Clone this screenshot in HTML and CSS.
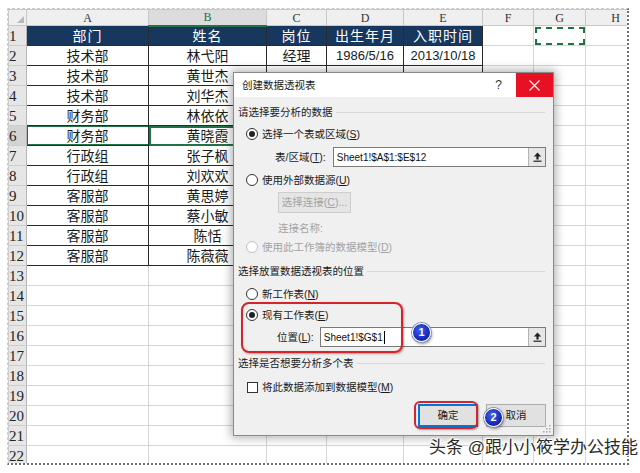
FILE: index.html
```html
<!DOCTYPE html>
<html lang="zh-CN">
<head>
<meta charset="utf-8">
<title>创建数据透视表</title>
<link rel="stylesheet" href="styles.css">
</head>
<body>
<div class="screen">
  <div class="sheet">
    <table class="grid">
      <colgroup>
        <col class="w-rh"><col class="w-a"><col class="w-b"><col class="w-c"><col class="w-d"><col class="w-e"><col class="w-f"><col class="w-g"><col class="w-h">
      </colgroup>
      <tr class="ch"><th class="corner"></th><th>A</th><th class="on">B</th><th>C</th><th>D</th><th>E</th><th>F</th><th>G</th><th>H</th></tr>
      <tr><th>1</th><td class="t hd">部门</td><td class="t hd">姓名</td><td class="t hd">岗位</td><td class="t hd">出生年月</td><td class="t hd">入职时间</td><td></td><td class="ants"></td><td></td></tr>
      <tr><th>2</th><td class="t">技术部</td><td class="t">林弋阳</td><td class="t">经理</td><td class="t n">1986/5/16</td><td class="t n">2013/10/18</td><td></td><td></td><td></td></tr>
      <tr><th>3</th><td class="t">技术部</td><td class="t">黄世杰</td><td class="t"></td><td class="t"></td><td class="t"></td><td></td><td></td><td></td></tr>
      <tr><th>4</th><td class="t">技术部</td><td class="t">刘华杰</td><td class="t"></td><td class="t"></td><td class="t"></td><td></td><td></td><td></td></tr>
      <tr><th>5</th><td class="t">财务部</td><td class="t">林依依</td><td class="t"></td><td class="t"></td><td class="t"></td><td></td><td></td><td></td></tr>
      <tr><th class="on">6</th><td class="t sel-row">财务部</td><td class="t active">黄晓霞</td><td class="t"></td><td class="t"></td><td class="t"></td><td></td><td></td><td></td></tr>
      <tr><th>7</th><td class="t">行政组</td><td class="t">张子枫</td><td class="t"></td><td class="t"></td><td class="t"></td><td></td><td></td><td></td></tr>
      <tr><th>8</th><td class="t">行政组</td><td class="t">刘欢欢</td><td class="t"></td><td class="t"></td><td class="t"></td><td></td><td></td><td></td></tr>
      <tr><th>9</th><td class="t">客服部</td><td class="t">黄思婷</td><td class="t"></td><td class="t"></td><td class="t"></td><td></td><td></td><td></td></tr>
      <tr><th>10</th><td class="t">客服部</td><td class="t">蔡小敏</td><td class="t"></td><td class="t"></td><td class="t"></td><td></td><td></td><td></td></tr>
      <tr><th>11</th><td class="t">客服部</td><td class="t">陈恬</td><td class="t"></td><td class="t"></td><td class="t"></td><td></td><td></td><td></td></tr>
      <tr><th>12</th><td class="t">客服部</td><td class="t">陈薇薇</td><td class="t"></td><td class="t"></td><td class="t"></td><td></td><td></td><td></td></tr>
      <tr><th>13</th><td></td><td></td><td></td><td></td><td></td><td></td><td></td><td></td></tr>
      <tr><th>14</th><td></td><td></td><td></td><td></td><td></td><td></td><td></td><td></td></tr>
      <tr><th>15</th><td></td><td></td><td></td><td></td><td></td><td></td><td></td><td></td></tr>
      <tr><th>16</th><td></td><td></td><td></td><td></td><td></td><td></td><td></td><td></td></tr>
      <tr><th>17</th><td></td><td></td><td></td><td></td><td></td><td></td><td></td><td></td></tr>
      <tr><th>18</th><td></td><td></td><td></td><td></td><td></td><td></td><td></td><td></td></tr>
      <tr><th>19</th><td></td><td></td><td></td><td></td><td></td><td></td><td></td><td></td></tr>
      <tr><th>20</th><td></td><td></td><td></td><td></td><td></td><td></td><td></td><td></td></tr>
      <tr><th>21</th><td></td><td></td><td></td><td></td><td></td><td></td><td></td><td></td></tr>
      <tr><th>22</th><td></td><td></td><td></td><td></td><td></td><td></td><td></td><td></td></tr>
    </table>
  </div>

  <div class="dlg">
    <div class="dlg-title">
      <span class="dlg-caption">创建数据透视表</span>
      <span class="dlg-help">?</span>
      <span class="dlg-close"><svg width="11" height="11" viewBox="0 0 11 11"><path d="M0.5 0.5 L10.5 10.5 M10.5 0.5 L0.5 10.5" stroke="#fff" stroke-width="1.2" fill="none"/></svg></span>
    </div>
    <div class="dlg-body">
      <div class="sec sec-1"><span>请选择要分析的数据</span></div>
      <div class="opt opt-range"><span class="radio on"></span><span>选择一个表或区域(<u>S</u>)</span></div>
      <div class="field field-range">
        <span class="lbl">表/区域(<u>T</u>):</span>
        <div class="ref"><span class="ref-text">Sheet1!$A$1:$E$12</span><span class="ref-btn"><svg width="9" height="10" viewBox="0 0 9 10"><path d="M4.5 0.5 L0.8 4.5 H3.4 V7.5 H5.6 V4.5 H8.2 Z" fill="#222"/><rect x="0.5" y="8.6" width="8" height="1.2" fill="#222"/></svg></span></div>
      </div>
      <div class="opt opt-ext"><span class="radio"></span><span>使用外部数据源(<u>U</u>)</span></div>
      <div class="conn-row"><span class="btn btn-dis"><span>选择连接(<u>C</u>)...</span></span></div>
      <div class="conn-name">连接名称:</div>
      <div class="opt opt-model dis"><span class="radio"></span><span>使用此工作簿的数据模型(<u>D</u>)</span></div>
      <div class="sec sec-2"><span>选择放置数据透视表的位置</span></div>
      <div class="opt opt-new"><span class="radio"></span><span>新工作表(<u>N</u>)</span></div>
      <div class="opt opt-exist"><span class="radio on"></span><span>现有工作表(<u>E</u>)</span></div>
      <div class="field field-loc">
        <span class="lbl">位置(<u>L</u>):</span>
        <div class="ref"><span class="ref-text">Sheet1!$G$1<span class="caret"></span></span><span class="ref-btn"><svg width="9" height="10" viewBox="0 0 9 10"><path d="M4.5 0.5 L0.8 4.5 H3.4 V7.5 H5.6 V4.5 H8.2 Z" fill="#222"/><rect x="0.5" y="8.6" width="8" height="1.2" fill="#222"/></svg></span></div>
      </div>
      <div class="sec sec-3"><span>选择是否想要分析多个表</span></div>
      <div class="opt opt-check"><span class="check"></span><span>将此数据添加到数据模型(<u>M</u>)</span></div>
      <div class="actions">
        <span class="btn btn-ok">确定</span>
        <span class="btn btn-cancel">取消</span>
      </div>
    </div>
    <svg class="grip" width="11" height="11" viewBox="0 0 11 11"><g fill="#a8a8a8"><rect x="8" y="2" width="1.5" height="1.5"/><rect x="5" y="5" width="1.5" height="1.5"/><rect x="8" y="5" width="1.5" height="1.5"/><rect x="2" y="8" width="1.5" height="1.5"/><rect x="5" y="8" width="1.5" height="1.5"/><rect x="8" y="8" width="1.5" height="1.5"/></g></svg>
  </div>

  <div class="mark mark-1"></div>
  <div class="mark mark-2"></div>
  <div class="badge badge-1">1</div>
  <div class="badge badge-2">2</div>
  <div class="watermark">头条 @跟小小筱学办公技能</div>
</div>
</body>
</html>
```

FILE: styles.css
```css
* { box-sizing: border-box; }
html, body { margin: 0; padding: 0; background: #fff; }

.screen {
  position: relative;
  width: 640px;
  height: 473px;
  overflow: hidden;
  background: #fff;
  display: flow-root;
  font-family: "Liberation Sans", "Noto Sans CJK SC", sans-serif;
}

/* ---------- spreadsheet ---------- */
.sheet {
  margin: 8px 0 0 7px;
  width: 622px;
  height: 457px;
  overflow: hidden;
  border-top: 1px dashed #c9c9c9;
  border-left: 1px dashed #cfcfcf;
  border-right: 2px dotted #6f6f6f;
  border-bottom: 2px dotted #6f6f6f;
}

.grid {
  border-collapse: collapse;
  table-layout: fixed;
  width: 637px;
}
.w-rh { width: 18px; }
.w-a { width: 122px; }
.w-b { width: 118px; }
.w-c { width: 60px; }
.w-d { width: 77px; }
.w-e { width: 79px; }
.w-f { width: 51px; }
.w-g { width: 52px; }
.w-h { width: 60px; }

.grid tr { height: 20px; }
.grid tr.ch { height: 16px; }

.grid td, .grid th {
  padding: 0;
  border: 1px solid #d6d6d6;
  overflow: hidden;
  white-space: nowrap;
}

.grid td {
  font: 14px "Liberation Sans", "Noto Sans CJK SC", sans-serif;
  color: #1a1a1a;
  text-align: center;
  vertical-align: middle;
  line-height: 18px;
}
.grid td.n { font-size: 13px; }

/* column headers */
.ch th {
  background: #efefef;
  border-color: #c8c8c8;
  font: 12px "Liberation Serif", serif;
  color: #333;
  font-weight: normal;
  line-height: 14px;
}
.ch th.on {
  background: #dcdcdc;
  color: #217346;
  border-bottom: 2px solid #217346;
}
.ch th.corner { position: relative; }
.ch th.corner::after {
  content: "";
  position: absolute;
  right: 2px;
  bottom: 2px;
  border-left: 7px solid transparent;
  border-bottom: 7px solid #b9b9b9;
}

/* row headers */
.grid tr:not(.ch) th {
  background: #e6e6e6;
  border-color: #cdcdcd;
  border-right-color: #b5b5b5;
  font: 15px "Liberation Serif", serif;
  color: #222;
  font-weight: normal;
  text-align: left;
  vertical-align: bottom;
  line-height: 15px;
  padding-left: 0;
  padding-bottom: 1px;
}
.grid tr:not(.ch) th.on { background: #d3d3d3; }

/* data table */
.grid td.t { border: 1px solid #2a2a2a; }
.grid td.hd {
  background: #17375e;
  color: #fff;
  letter-spacing: 1px;
}
.grid td.active { outline: 2px solid #217346; outline-offset: -2px; }
.grid td.sel-row { box-shadow: inset 1px 1px 0 #217346, inset 0 -1px 0 #217346; }
.grid td.ants { outline: 2px dashed #217346; outline-offset: -3px; }

/* ---------- dialog ---------- */
.dlg {
  position: absolute;
  left: 233px;
  top: 72px;
  width: 321px;
  height: 364px;
  border: 1px solid #8a8a8a;
  background: #f0f0f0;
  box-shadow: 0 0 9px 2px rgba(0, 0, 0, 0.3);
  font: 10.5px/1.2 "Liberation Sans", "Noto Sans CJK SC", sans-serif;
  color: #1b1b1b;
  display: flex;
  flex-direction: column;
}

.dlg-title {
  height: 24px;
  flex: none;
  background: #fff;
  display: flex;
  align-items: center;
}
.dlg-caption { padding-left: 8px; flex: 1; padding-top: 1px; }
.dlg-help {
  font: 12px "Liberation Sans", sans-serif;
  color: #333;
  margin-right: 14px;
}
.dlg-close {
  width: 37px;
  height: 24px;
  background: #e81123;
  display: flex;
  align-items: center;
  justify-content: center;
}

.dlg-body {
  flex: 1;
  display: flex;
  flex-direction: column;
}

.sec {
  height: 20px;
  display: flex;
  align-items: center;
  padding-left: 4px;
}
.sec::after {
  content: "";
  flex: 1;
  height: 1px;
  background: #d8d8d8;
  margin: 0 8px 0 3px;
}
.sec-1 { margin-top: 5px; }
.sec-2 { margin-top: 4px; }
.sec-3 { margin-top: 6px; }

.opt {
  height: 20px;
  display: flex;
  align-items: center;
  gap: 4px;
  padding-left: 12px;
}
.opt-range { margin-top: 2px; }
.opt-ext { margin-top: 3px; }
.opt-model { margin-top: 0; }
.opt-new { margin-top: 3px; }
.opt-exist { margin-top: 1px; }
.opt-check { margin-top: 4px; padding-left: 13px; }
.opt.dis { color: #a3a3a3; }

.radio {
  position: relative;
  width: 12px;
  height: 12px;
  border-radius: 50%;
  border: 1px solid #333;
  background: #fff;
  flex: none;
}
.radio.on::after {
  content: "";
  position: absolute;
  left: 2px;
  top: 2px;
  width: 6px;
  height: 6px;
  border-radius: 50%;
  background: #222;
}
.opt.dis .radio { border-color: #c2c2c2; }

.check {
  width: 11px;
  height: 11px;
  border: 1px solid #333;
  background: #fff;
  flex: none;
}

.field {
  height: 20px;
  display: flex;
  align-items: center;
  padding-right: 7px;
}
.field-range { margin-top: 3px; padding-left: 41px; }
.field-loc { margin-top: 2px; padding-left: 43px; }
.field .lbl { margin-right: 7px; }
.field-loc .lbl { margin-right: 6px; }

.ref {
  flex: 1;
  height: 20px;
  display: flex;
  border: 1px solid #7a7a7a;
  background: #fff;
}
.ref-text {
  flex: 1;
  display: flex;
  align-items: center;
  padding-left: 3px;
  font: 10px "Liberation Sans", sans-serif;
  color: #111;
}
.caret {
  display: inline-block;
  width: 1px;
  height: 13px;
  background: #000;
  margin-left: 1px;
}
.ref-btn {
  width: 17px;
  display: flex;
  align-items: center;
  justify-content: center;
  background: #e6e6e6;
  border-left: 1px solid #b4b4b4;
}

.conn-row {
  margin-top: 2px;
  height: 21px;
  padding-left: 44px;
  display: flex;
}
.conn-name {
  margin-top: 6px;
  height: 18px;
  padding-left: 44px;
  display: flex;
  align-items: center;
  color: #a3a3a3;
}

.btn {
  display: flex;
  align-items: center;
  justify-content: center;
  background: #e1e1e1;
  border: 1px solid #adadad;
}
.btn-dis {
  width: 73px;
  height: 21px;
  color: #a3a3a3;
  background: #e5e5e5;
  border-color: #cdcdcd;
}

.actions {
  margin-top: 7px;
  height: 23px;
  display: flex;
  justify-content: flex-end;
  gap: 8px;
  padding-right: 7px;
}
.btn-ok, .btn-cancel { width: 60px; height: 23px; }
.btn-ok {
  border-color: #0078d7;
  box-shadow: inset 0 0 0 1px #0078d7;
}

.grip { position: absolute; right: 1px; bottom: 1px; }

/* ---------- annotations ---------- */
.mark {
  position: absolute;
  border: 2px solid #d4252d;
  border-radius: 8px;
  box-shadow: 1px 1px 2px rgba(0, 0, 0, 0.35), inset 0 0 1px rgba(0, 0, 0, 0.2);
}
.mark-1 { left: 241px; top: 302px; width: 162px; height: 51px; }
.mark-2 { left: 414px; top: 401px; width: 64px; height: 28px; border-radius: 6px; }

.badge {
  position: absolute;
  width: 19px;
  height: 19px;
  border-radius: 50%;
  background: radial-gradient(circle at 40% 35%, #3b5ff0, #1224b0 70%);
  border: 1.5px solid #fff;
  box-shadow: 0 0 0 1px #8a8fa8, 1px 2px 3px rgba(0, 0, 0, 0.45);
  color: #fff;
  font: bold 11px/16px "Liberation Sans", sans-serif;
  text-align: center;
}
.badge-1 { left: 412px; top: 323px; }
.badge-2 { left: 484px; top: 408px; }

.watermark {
  position: absolute;
  left: 429px;
  top: 437px;
  font: 17px/22px "Liberation Sans", "Noto Sans CJK SC", sans-serif;
  color: #2a2a2a;
  white-space: nowrap;
  text-shadow: 1px 0 0 #fff, -1px 0 0 #fff, 0 1px 0 #fff, 0 -1px 0 #fff, 1px 1px 1px #fff, -1px -1px 1px #fff;
}
```
